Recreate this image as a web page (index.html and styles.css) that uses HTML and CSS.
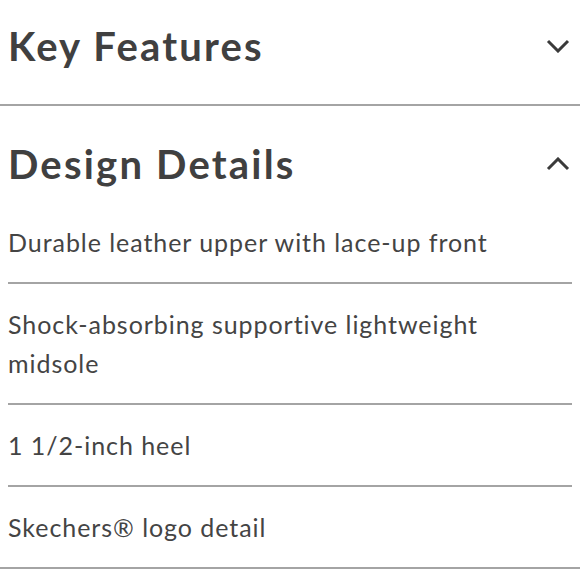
FILE: index.html
```html
<!DOCTYPE html>
<html lang="en">
<head>
<meta charset="utf-8">
<title>Product details</title>
<link rel="stylesheet" href="styles.css">
</head>
<body>
<section class="acc acc-first">
  <div class="acc-head">
    <h2 class="acc-title">Key Features</h2>
    <svg class="chev" viewBox="0 0 24 14" width="24" height="14" aria-hidden="true"><polyline points="2,2 12,12 22,2"/></svg>
  </div>
</section>
<section class="acc acc-open">
  <div class="acc-head">
    <h2 class="acc-title">Design Details</h2>
    <svg class="chev" viewBox="0 0 24 14" width="24" height="14" aria-hidden="true"><polyline points="2,12 12,2 22,12"/></svg>
  </div>
  <ul class="list">
    <li class="item">Durable leather upper with lace-up front</li>
    <li class="item">Shock-absorbing supportive lightweight midsole</li>
    <li class="item">1 1/2-inch heel</li>
    <li class="item">Skechers® logo detail</li>
  </ul>
</section>
</body>
</html>
```
FILE: styles.css
```css
html, body {
  margin: 0;
  padding: 0;
  background: #ffffff;
}
body {
  font-family: "Lato", "Noto Sans", sans-serif;
  color: #444444;
  width: 580px;
}
.acc {
  border-bottom: 2px solid #a4a4a4;
}
.acc-head {
  display: flex;
  align-items: center;
  justify-content: space-between;
  padding: 0 10px 0 8px;
}
.acc-first .acc-head {
  padding-top: 22px;
  padding-bottom: 34px;
}
.acc-open .acc-head {
  padding-top: 34px;
  padding-bottom: 14px;
}
.acc-title {
  margin: 0;
  font-size: 40px;
  line-height: 48px;
  font-weight: 700;
  letter-spacing: 2.2px;
  color: #404040;
}
.chev {
  display: block;
  fill: none;
  stroke: #3a3a3a;
  stroke-width: 3;
}
.list {
  list-style: none;
  margin: 0;
  padding: 0 8px;
}
.item {
  font-size: 25px;
  line-height: 39px;
  letter-spacing: 0.95px;
  padding: 21px 0 20px 0;
  border-bottom: 2px solid #a4a4a4;
  color: #444444;
}
.item:last-child {
  border-bottom: none;
}
```
